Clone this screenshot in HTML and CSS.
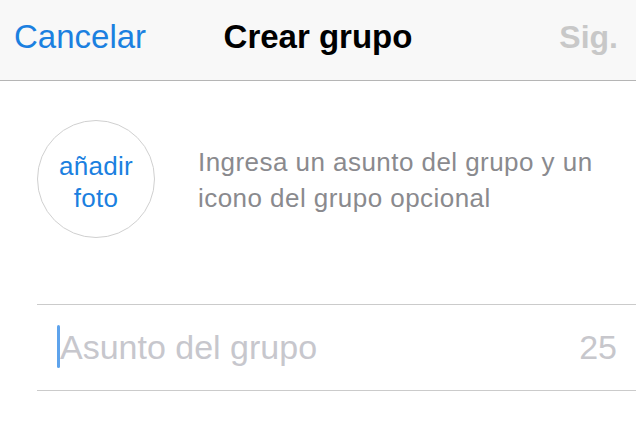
FILE: index.html
```html
<!DOCTYPE html>
<html lang="es">
<head>
<meta charset="utf-8">
<title>Crear grupo</title>
<link rel="stylesheet" href="styles.css">
</head>
<body>
<header class="navbar">
  <span class="nav-btn nav-cancel">Cancelar</span>
  <span class="nav-title">Crear grupo</span>
  <span class="nav-btn nav-next">Sig.</span>
</header>
<main class="content">
  <section class="intro">
    <div class="photo">añadir<br>foto</div>
    <p class="hint">Ingresa un asunto del grupo y un icono del grupo opcional</p>
  </section>
  <div class="subject">
    <span class="cursor"></span>
    <span class="placeholder">Asunto del grupo</span>
    <span class="counter">25</span>
  </div>
</main>
</body>
</html>
```

FILE: styles.css
```css
* { box-sizing: border-box; }
html, body {
  margin: 0;
  padding: 0;
  background: #ffffff;
  font-family: "Liberation Sans", Arial, sans-serif;
}
.navbar {
  position: relative;
  height: 81px;
  padding: 20px 18px 0 14px;
  background: #f8f8f8;
  border-bottom: 1px solid #b5b5b5;
  display: flex;
  justify-content: space-between;
  align-items: flex-start;
  font-size: 33px;
  line-height: 34px;
}
.nav-cancel { color: #1b80e0; }
.nav-title {
  position: absolute;
  left: 0;
  right: 0;
  top: 20px;
  text-align: center;
  font-weight: bold;
  color: #000;
  font-size: 33px;
}
.nav-next {
  color: #c8c8c8;
  font-weight: bold;
  font-size: 32px;
}
.content {
  padding-top: 39px;
}
.intro {
  display: flex;
  align-items: center;
  gap: 43px;
  padding-left: 37px;
}
.photo {
  flex: none;
  width: 118px;
  height: 118px;
  border: 1.5px solid #d0d0d0;
  border-radius: 50%;
  display: flex;
  align-items: center;
  justify-content: center;
  text-align: center;
  color: #1b80e0;
  font-size: 26px;
  line-height: 32px;
  letter-spacing: 0.3px;
  padding-top: 6px;
}
.hint {
  margin: 0;
  color: #8a8a8e;
  font-size: 26px;
  line-height: 36px;
  letter-spacing: 0.45px;
  padding-right: 30px;
  padding-top: 2px;
}
.subject {
  margin: 66px 0 0 37px;
  height: 87px;
  border-top: 1px solid #cbcbcb;
  border-bottom: 1px solid #cbcbcb;
  display: flex;
  align-items: center;
  padding: 0 19px 0 20px;
}
.cursor {
  flex: none;
  width: 3px;
  height: 43px;
  margin-top: -2px;
  border-radius: 2px;
  background: #5ea3ec;
}
.placeholder {
  flex: 1;
  color: #c7c7cd;
  font-size: 34px;
}
.counter {
  color: #c7c7cc;
  font-size: 34px;
}
```
